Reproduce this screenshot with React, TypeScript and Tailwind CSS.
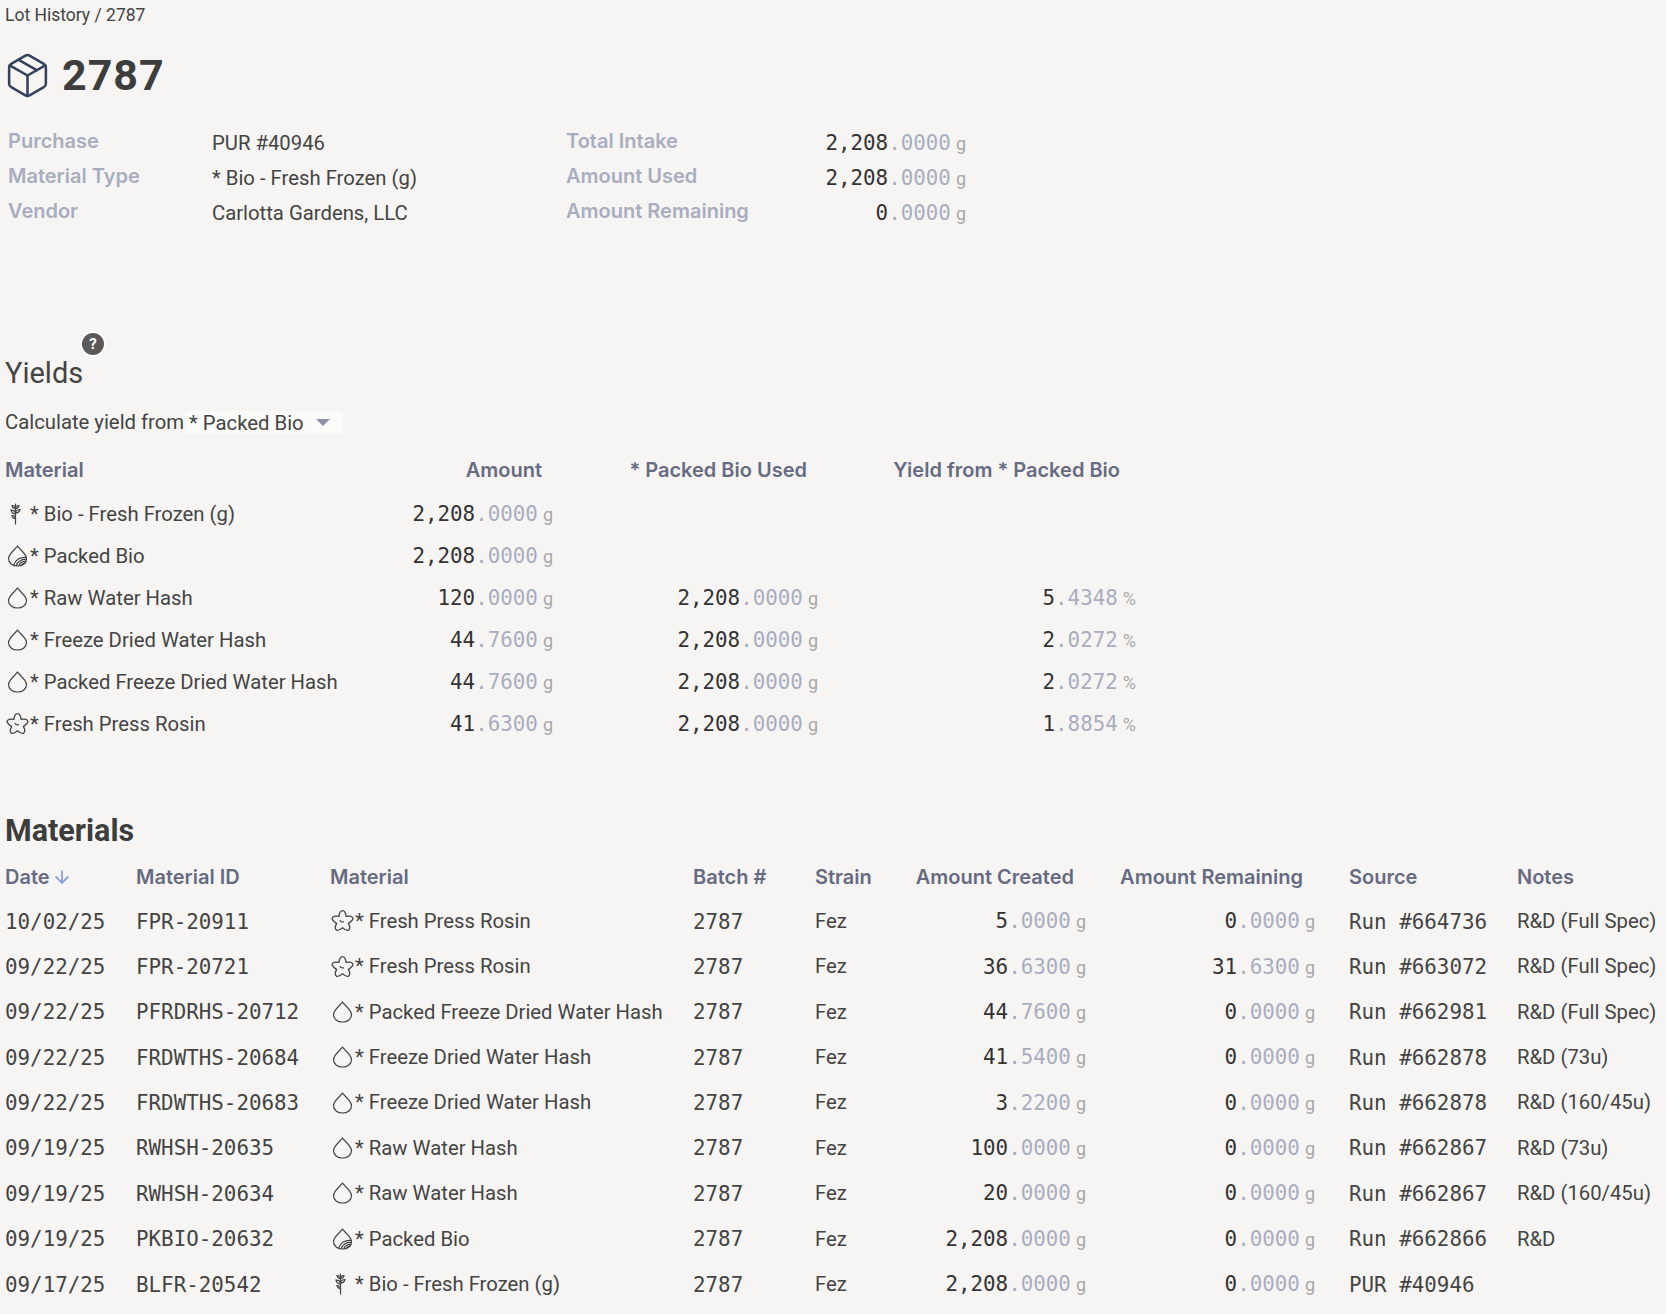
import React from 'react';
import { Package, ArrowDown } from 'lucide-react';

type IconName = 'plant' | 'packed' | 'drop' | 'rosin';

const sans = "font-['Roboto',sans-serif]";
const head = "font-['Inter',sans-serif]";
const mono = "font-['DejaVu_Sans_Mono',monospace]";

const DROP = 'M12.500 2.200C10 5.500 3.500 10 3.500 14.500 3.500 19 7.500 22 12.500 22s9-3 9-7.500C21.500 10 15 5.500 12.500 2.200z';

const MaterialIcon = ({ name }: { name: IconName }) => {
  if (name === 'plant') {
    return (
      <svg width="24" height="24" viewBox="0 0 24 24" fill="none" stroke="#444" strokeWidth="1.2" strokeLinecap="round">
        <path d="M10.500 2v20" />
        <path d="M10.500 6.500C9 6.500 7.500 5.500 7 3.500c2 0 3.500 1.200 3.500 3z" />
        <path d="M10.500 6.500c1.500 0 3-1 3.500-3-2 0-3.500 1.200-3.500 3z" />
        <path d="M10.500 12C8.500 12 6.500 10.500 6 8.200c2.500 0 4.500 1.500 4.500 3.800z" />
        <path d="M10.500 11c2 0 4-1.500 4.500-3.500-2.500 0-4.500 1.500-4.500 3.500z" />
        <path d="M10.500 16.500c-1.500 0-3-1-3.500-3 2 0 3.500 1.200 3.500 3z" />
      </svg>
    );
  }
  if (name === 'packed') {
    return (
      <svg width="24" height="24" viewBox="0 0 24 24" fill="none" stroke="#444" strokeWidth="1.2">
        <path d={DROP} />
        <path d="M21.500 13.500c-6-1-11.500 2.500-13 8M21.500 15.500c-4.500-.6-9 1.800-10.300 6.300M21.500 17.500c-3.500-.3-6.500 1.200-7.700 4.500M20.500 19.500c-2-.2-3.800.7-4.500 2.300" />
      </svg>
    );
  }
  if (name === 'rosin') {
    return (
      <svg width="24" height="24" viewBox="0 0 24 24" fill="none" stroke="#444" strokeWidth="1.3" strokeLinejoin="round">
        <path d="M8.860 7.480C9.500 3 11 1.600 12.500 1.600S15.500 3 16.140 7.480C20 6.500 22.500 7.500 22.900 9.200S21.500 12.500 18.400 14.420C20 17.500 20 20 18.700 21S15 20.800 12.500 18.700C10 20.800 7.600 22 6.300 21S5 17.500 6.600 14.420C3.500 12.500 1.700 10.900 2.100 9.200S5 6.500 8.860 7.480z" />
        <path d="M10 11.500c.8 1.200 2 1.700 3.500 1.300" strokeLinecap="round" />
      </svg>
    );
  }
  return (
    <svg width="24" height="24" viewBox="0 0 24 24" fill="none" stroke="#444" strokeWidth="1.2">
      <path d={DROP} />
    </svg>
  );
};

const Amount = ({ value, unit = 'g' }: { value: string; unit?: string }) => {
  const [whole, frac] = value.split('.');
  return (
    <span className={`${mono} text-[20.85px] leading-none whitespace-nowrap`}>
      <span className="text-[#333333]">{whole}</span>
      <span className="text-[#a9adc0]">.{frac}</span>
      <span className={`${sans} ml-[5px] text-[18px] text-[#a8a8a8]`}>{unit}</span>
    </span>
  );
};

const MaterialName = ({ icon, name }: { icon: IconName; name: string }) => (
  <span className="flex items-center">
    <span className="w-[25px] shrink-0">
      <MaterialIcon name={icon} />
    </span>
    <span className={`${sans} text-[20.3px] text-[#444444] whitespace-nowrap`}>* {name}</span>
  </span>
);

const infoLeft = [
  ['Purchase', 'PUR #40946'],
  ['Material Type', '* Bio - Fresh Frozen (g)'],
  ['Vendor', 'Carlotta Gardens, LLC'],
];

const infoRight = [
  ['Total Intake', '2,208.0000'],
  ['Amount Used', '2,208.0000'],
  ['Amount Remaining', '0.0000'],
];

const yields: { icon: IconName; name: string; amount: string; used?: string; pct?: string }[] = [
  { icon: 'plant', name: 'Bio - Fresh Frozen (g)', amount: '2,208.0000' },
  { icon: 'packed', name: 'Packed Bio', amount: '2,208.0000' },
  { icon: 'drop', name: 'Raw Water Hash', amount: '120.0000', used: '2,208.0000', pct: '5.4348' },
  { icon: 'drop', name: 'Freeze Dried Water Hash', amount: '44.7600', used: '2,208.0000', pct: '2.0272' },
  { icon: 'drop', name: 'Packed Freeze Dried Water Hash', amount: '44.7600', used: '2,208.0000', pct: '2.0272' },
  { icon: 'rosin', name: 'Fresh Press Rosin', amount: '41.6300', used: '2,208.0000', pct: '1.8854' },
];

const materials: { date: string; id: string; icon: IconName; name: string; created: string; left: string; source: string; notes: string }[] = [
  { date: '10/02/25', id: 'FPR-20911', icon: 'rosin', name: 'Fresh Press Rosin', created: '5.0000', left: '0.0000', source: 'Run #664736', notes: 'R&D (Full Spec)' },
  { date: '09/22/25', id: 'FPR-20721', icon: 'rosin', name: 'Fresh Press Rosin', created: '36.6300', left: '31.6300', source: 'Run #663072', notes: 'R&D (Full Spec)' },
  { date: '09/22/25', id: 'PFRDRHS-20712', icon: 'drop', name: 'Packed Freeze Dried Water Hash', created: '44.7600', left: '0.0000', source: 'Run #662981', notes: 'R&D (Full Spec)' },
  { date: '09/22/25', id: 'FRDWTHS-20684', icon: 'drop', name: 'Freeze Dried Water Hash', created: '41.5400', left: '0.0000', source: 'Run #662878', notes: 'R&D (73u)' },
  { date: '09/22/25', id: 'FRDWTHS-20683', icon: 'drop', name: 'Freeze Dried Water Hash', created: '3.2200', left: '0.0000', source: 'Run #662878', notes: 'R&D (160/45u)' },
  { date: '09/19/25', id: 'RWHSH-20635', icon: 'drop', name: 'Raw Water Hash', created: '100.0000', left: '0.0000', source: 'Run #662867', notes: 'R&D (73u)' },
  { date: '09/19/25', id: 'RWHSH-20634', icon: 'drop', name: 'Raw Water Hash', created: '20.0000', left: '0.0000', source: 'Run #662867', notes: 'R&D (160/45u)' },
  { date: '09/19/25', id: 'PKBIO-20632', icon: 'packed', name: 'Packed Bio', created: '2,208.0000', left: '0.0000', source: 'Run #662866', notes: 'R&D' },
  { date: '09/17/25', id: 'BLFR-20542', icon: 'plant', name: 'Bio - Fresh Frozen (g)', created: '2,208.0000', left: '0.0000', source: 'PUR #40946', notes: '' },
];

const yieldCols = 'grid grid-cols-[350px_198px_265px_318px] items-center';
const materialCols = 'grid grid-cols-[131px_194px_363px_122px_90px_181px_229px_202px_1fr] items-center';
const th = `${head} text-[20px] font-semibold text-[#666b82] whitespace-nowrap`;
const label = `${head} text-[20px] font-semibold text-[#a9adc0] h-[35px] flex items-center`;
const cellMono = `${mono} text-[20.85px] text-[#444444] whitespace-nowrap pt-[2px]`;

export default function App() {
  return (
    <div className="min-h-[1314px] bg-[#f6f5f3] pl-[5px] overflow-hidden text-[#444444]">
      <div className={`${sans} pt-[3px] text-[17.5px] leading-6 text-[#444444]`}>Lot History / 2787</div>

      <div className="mt-[23px] flex items-center h-[50px]">
        <Package size={49} strokeWidth={1.25} className="text-[#33415c] -ml-[2px]" />
        <h1 className={`${sans} ml-[10px] text-[43px] font-bold text-[#3d3d3d] tracking-[1px]`}>2787</h1>
      </div>

      <div className="mt-[23px] flex">
        <div className="w-[561px] grid grid-cols-[204px_1fr] pl-[3px]">
          {infoLeft.map(([k, v]) => (
            <React.Fragment key={k}>
              <div className={label}>{k}</div>
              <div className={`${sans} text-[20.3px] text-[#444444] h-[35px] flex items-center pt-[5px]`}>{v}</div>
            </React.Fragment>
          ))}
        </div>
        <div className="w-[400px] grid grid-cols-[1fr_auto]">
          {infoRight.map(([k, v]) => (
            <React.Fragment key={k}>
              <div className={label}>{k}</div>
              <div className="h-[35px] flex items-center justify-end pt-[5px]">
                <Amount value={v} />
              </div>
            </React.Fragment>
          ))}
        </div>
      </div>

      <div className="mt-[103px] pl-[75px] h-[26px]">
        <div className={`${sans} flex h-[26px] w-[26px] items-center justify-center rounded-full border-2 border-white bg-[#5a5a5a] text-[15px] font-bold text-white`}>?</div>
      </div>
      <h2 className={`${sans} -mt-[2px] text-[29px] leading-9 text-[#444444]`}>Yields</h2>

      <div className={`${sans} mt-[16px] flex items-center text-[20.3px] text-[#444444]`}>
        <span>Calculate yield from</span>
        <span className="ml-[1px] flex h-[23px] w-[158px] items-center rounded-[3px] bg-[#fbfbfa] pl-[4px]">
          <span className="translate-y-[1px]">* Packed Bio</span>
          <span className="ml-[12px] h-0 w-0 border-x-[7px] border-t-[7px] border-x-transparent border-t-[#8f92a6]" />
        </span>
      </div>

      <div className={`${yieldCols} mt-[15px] h-[36px]`}>
        <div className={th}>Material</div>
        <div className={`${th} text-right pr-[11px]`}>Amount</div>
        <div className={`${th} text-right pr-[11px]`}>* Packed Bio Used</div>
        <div className={`${th} text-right pr-[16px]`}>Yield from * Packed Bio</div>
      </div>
      <div className="mt-[5px]">
        {yields.map((y) => (
          <div key={y.name} className={`${yieldCols} h-[42px]`}>
            <MaterialName icon={y.icon} name={y.name} />
            <div className="text-right pt-[2px]"><Amount value={y.amount} /></div>
            <div className="text-right pt-[2px]">{y.used && <Amount value={y.used} />}</div>
            <div className="text-right pt-[2px]">{y.pct && <Amount value={y.pct} unit="%" />}</div>
          </div>
        ))}
      </div>

      <h2 className={`${sans} mt-[68px] text-[30.5px] font-bold leading-9 text-[#3d3d3d]`}>Materials</h2>

      <div className={`${materialCols} mt-[10px] h-[36px]`}>
        <div className={`${th} flex items-center gap-[2px]`}>
          Date
          <ArrowDown size={20} strokeWidth={2.25} className="text-[#8a9fe8]" />
        </div>
        <div className={th}>Material ID</div>
        <div className={th}>Material</div>
        <div className={th}>Batch #</div>
        <div className={th}>Strain</div>
        <div className={`${th} text-right pr-[12px]`}>Amount Created</div>
        <div className={`${th} text-right pr-[12px]`}>Amount Remaining</div>
        <div className={`${th} pl-[34px]`}>Source</div>
        <div className={th}>Notes</div>
      </div>
      <div className="mt-[3px]">
        {materials.map((m) => (
          <div key={m.id} className={`${materialCols} h-[45.4px]`}>
            <div className={cellMono}>{m.date}</div>
            <div className={cellMono}>{m.id}</div>
            <MaterialName icon={m.icon} name={m.name} />
            <div className={cellMono}>2787</div>
            <div className={`${sans} text-[20.3px]`}>Fez</div>
            <div className="text-right pt-[2px]"><Amount value={m.created} /></div>
            <div className="text-right pt-[2px]"><Amount value={m.left} /></div>
            <div className={`${cellMono} pl-[34px]`}>{m.source}</div>
            <div className={`${sans} text-[20.3px] whitespace-nowrap`}>{m.notes}</div>
          </div>
        ))}
      </div>
    </div>
  );
}
